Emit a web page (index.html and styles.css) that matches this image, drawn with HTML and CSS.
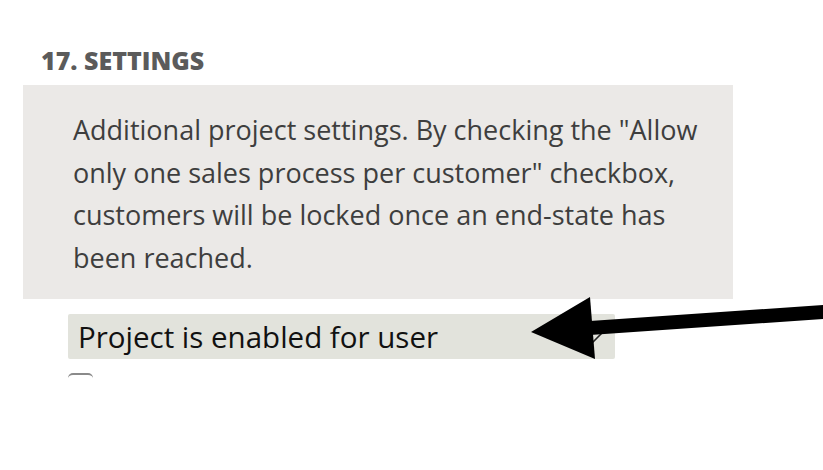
FILE: index.html
```html
<!DOCTYPE html>
<html>
<head>
<meta charset="utf-8">
<link rel="stylesheet" href="styles.css">
</head>
<body>
<div class="page">
  <h2 class="title">17. SETTINGS</h2>
  <div class="info">
    <p class="info-text">Additional project settings. By checking the "Allow only one sales process per customer" checkbox, customers will be locked once an end-state has been reached.</p>
  </div>
  <div class="field">
    <div class="select">
      <span class="select-label">Project is enabled for user</span>
      <svg class="chevron" width="26" height="14" viewBox="0 0 26 14"><path d="M1 1 L13 13 L25 1" fill="none" stroke="#222" stroke-width="1.6"/></svg>
    </div>
    <div class="checkbox"></div>
  </div>
  <svg class="arrow" width="823" height="470" viewBox="0 0 823 470">
    <polygon points="823,305 823,319 590,335 590,321" fill="#000"/>
    <polygon points="531,332 590,297 595,359" fill="#000"/>
  </svg>
</div>
</body>
</html>
```
FILE: styles.css
```css
html, body {
  margin: 0;
  padding: 0;
  background: #fff;
  overflow: hidden;
}
.page {
  position: relative;
  width: 823px;
  height: 470px;
  padding-top: 44px;
  box-sizing: border-box;
}
.title {
  margin: 0 0 0 41px;
  font-family: "Open Sans", sans-serif;
  font-weight: 800;
  font-size: 25px;
  line-height: 32px;
  color: #5b5b5b;
}
.info {
  margin: 9px 0 0 23px;
  width: 710px;
  height: 214px;
  background: #ebe9e7;
  box-sizing: border-box;
  padding: 24px 16px 0 50px;
}
.info-text {
  margin: 0;
  font-family: "Open Sans", sans-serif;
  font-size: 27px;
  line-height: 42.5px;
  color: #3e3e3e;
}
.field {
  margin: 15px 0 0 68px;
}
.select {
  width: 547px;
  height: 45px;
  background: #e2e3dc;
  border-radius: 2px;
  display: flex;
  align-items: center;
  justify-content: space-between;
  padding: 0 12px 0 10px;
  box-sizing: border-box;
}
.select-label {
  font-family: "Open Sans", sans-serif;
  font-size: 29.5px;
  color: #111;
}
.chevron {
  margin-top: 5px;
}
.checkbox {
  margin-top: 14px;
  width: 25px;
  height: 5px;
  border-top: 2px solid #8a8a8a;
  border-radius: 6px 6px 0 0;
  box-sizing: border-box;
}
.arrow {
  position: absolute;
  left: 0;
  top: 0;
}
```
